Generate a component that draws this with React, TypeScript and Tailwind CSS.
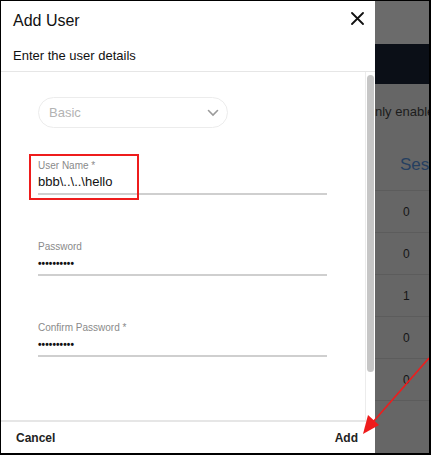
import React from "react";

function Field({ label, value, mt, password }: { label: string; value: string; mt: string; password?: boolean }) {
  return (
    <div className={`w-[289px] ${mt}`}>
      <div className="text-[10px] leading-[12px] text-[#8a8a8a]">{label}</div>
      {password ? (
        <div className="mt-[4px] h-[14px] flex items-center text-[10px] font-bold tracking-[0.1px] text-[#111] leading-none">
          ••••••••••
        </div>
      ) : (
        <div className="mt-[2px] h-[16px] text-[13px] leading-[16px] text-[#111]">{value}</div>
      )}
      <div className="mt-[3px] h-[2px] bg-[#cfcfcf]" />
    </div>
  );
}

export default function App() {
  const rows = ["0", "0", "1", "0", "0"];
  return (
    <div
      className="relative w-[431px] h-[455px] overflow-hidden border-l border-t border-r-2 border-b-2 border-black bg-white flex"
      style={{ fontFamily: '"Liberation Sans", Arial, sans-serif' }}
    >
      {/* Modal */}
      <div className="w-[374px] h-full flex flex-col bg-white">
        <div className="h-[70px] shrink-0 px-[12px] pt-[10px] relative">
          <div className="text-[16px] leading-[20px] text-[#111]">Add User</div>
          <div className="mt-[17px] text-[13px] leading-[16px] text-[#111]">Enter the user details</div>
          <svg className="absolute right-[11px] top-[11px]" width="13" height="13" viewBox="0 0 13 13">
            <path d="M1 1 L12 12 M12 1 L1 12" stroke="#111" strokeWidth="1.8" strokeLinecap="round" />
          </svg>
        </div>
        <div className="h-[1px] bg-[#e6e6e6]" />
        <div className="flex-1 flex min-h-0">
          <div className="flex-1 relative pl-[37px] pt-[25px]">
            <div className="w-[190px] h-[31px] rounded-full border border-[#ececec] flex items-center justify-between pl-[10px] pr-[8px]">
              <span className="text-[13px] text-[#b3b3b3]">Basic</span>
              <svg width="12" height="8" viewBox="0 0 12 8">
                <path d="M1.5 1.5 L6 6 L10.5 1.5" stroke="#9a9a9a" strokeWidth="1.6" fill="none" strokeLinecap="round" />
              </svg>
            </div>
            <Field label="User Name *" value="bbb\..\..\hello" mt="mt-[32px]" />
            <Field label="Password" value="" mt="mt-[46px]" password />
            <Field label="Confirm Password *" value="" mt="mt-[46px]" password />
            {/* red highlight box */}
            <div className="absolute left-[28px] top-[82px] w-[110px] h-[46px] border-2 border-[#ee1c1c]" />
          </div>
          <div className="w-[10px] border-l border-[#ececec] flex justify-center pt-[3px]">
            <div className="w-[7px] h-[297px] rounded-full bg-[#c6c6c6]" />
          </div>
        </div>
        <div className="h-[2px] bg-[#e6e6e6]" />
        <div className="h-[31px] shrink-0 flex items-center justify-between pl-[15px] pr-[17px]">
          <span className="text-[12px] font-bold text-[#222]">Cancel</span>
          <span className="text-[12px] font-bold text-[#222]">Add</span>
        </div>
      </div>

      {/* Dimmed background page */}
      <div className="flex-1 h-full bg-[#666666] flex flex-col overflow-hidden">
        <div className="h-[43px] shrink-0 bg-[#6b6b6b]" />
        <div className="h-[40px] shrink-0 bg-[#0b0f17]" />
        <div className="h-[56px] shrink-0 flex items-center whitespace-nowrap text-[13px] text-[#1c1c1c]">nly enabled</div>
        <div className="h-[51px] shrink-0 flex items-center pl-[25px] whitespace-nowrap text-[17px] text-[#253f60] border-b border-[#5c5c5c]">Sess</div>
        {rows.map((r, i) => (
          <div key={i} className="h-[42px] shrink-0 flex items-center pl-[28px] text-[12px] text-[#151515] border-b border-[#5c5c5c]">
            {r}
          </div>
        ))}
      </div>

      {/* red arrow annotation */}
      <svg className="absolute left-0 top-0 pointer-events-none" width="431" height="455" viewBox="0 0 431 455">
        <line x1="428" y1="357" x2="372" y2="421" stroke="#ee1c1c" strokeWidth="1.6" />
        <polygon points="362,433 367,414 378,424" fill="#ee1c1c" />
      </svg>
    </div>
  );
}
